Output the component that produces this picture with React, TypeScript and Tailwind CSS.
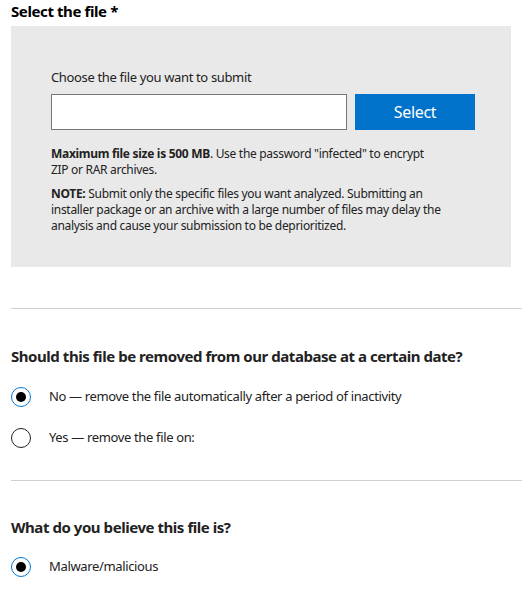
import React, { useState } from 'react';

const Radio: React.FC<{ checked: boolean; label: string; onClick: () => void }> = ({ checked, label, onClick }) => (
  <div className="flex items-center h-[20px] cursor-pointer" onClick={onClick}>
    <span
      className={`w-[20px] h-[20px] rounded-full border flex items-center justify-center shrink-0 ${
        checked ? 'border-[#0078d4]' : 'border-[#222]'
      }`}
    >
      {checked && <span className="w-[10px] h-[10px] rounded-full bg-black" />}
    </span>
    <span className="ml-[18px] text-[13px] tracking-[-0.35px] text-[#222]">{label}</span>
  </div>
);

const App: React.FC = () => {
  const [removal, setRemoval] = useState('no');
  const [kind, setKind] = useState('malware');

  return (
    <div className="w-[522px] pl-[11px] bg-white text-[#222]" style={{ fontFamily: '"Noto Sans", sans-serif' }}>
      <h2 className="text-[15px] font-bold leading-[20px] pt-[1px] tracking-[-0.4px] text-black">Select the file *</h2>

      <div className="mt-[5px] w-[500px] h-[241px] bg-[#e9e9e9] pl-[40px] pt-[42px]">
        <p className="text-[13px] leading-[18px] tracking-[-0.35px]">Choose the file you want to submit</p>
        <div className="flex mt-[8px] gap-[8px]">
          <input className="w-[296px] shrink-0 h-[36px] bg-white border border-[#767676] outline-none" />
          <button className="w-[120px] shrink-0 h-[36px] bg-[#0072c9] text-white text-[16px] tracking-[-0.3px]">
            Select
          </button>
        </div>
        <div className="w-[392px] text-[12px] leading-[16px] tracking-[-0.3px]">
          <p className="mt-[16px]">
            <strong>Maximum file size is 500 MB</strong>. Use the password "infected" to encrypt ZIP or RAR archives.
          </p>
          <p className="mt-[8px]">
            <strong>NOTE:</strong> Submit only the specific files you want analyzed. Submitting an installer package or
            an archive with a large number of files may delay the analysis and cause your submission to be
            deprioritized.
          </p>
        </div>
      </div>

      <div className="mt-[41px] border-t border-[#d0d0d0]" />

      <h3 className="mt-[37px] text-[15px] font-bold leading-[20px] tracking-[-0.45px]">
        Should this file be removed from our database at a certain date?
      </h3>
      <div className="mt-[21px] flex flex-col gap-[21px]">
        <Radio
          checked={removal === 'no'}
          label="No — remove the file automatically after a period of inactivity"
          onClick={() => setRemoval('no')}
        />
        <Radio checked={removal === 'yes'} label="Yes — remove the file on:" onClick={() => setRemoval('yes')} />
      </div>

      <div className="mt-[32px] border-t border-[#d0d0d0]" />

      <h3 className="mt-[36px] text-[15px] font-bold leading-[20px] tracking-[-0.45px]">
        What do you believe this file is?
      </h3>
      <div className="mt-[20px]">
        <Radio checked={kind === 'malware'} label="Malware/malicious" onClick={() => setKind('malware')} />
      </div>
      <div className="h-[17px]" />
    </div>
  );
};

export default App;
